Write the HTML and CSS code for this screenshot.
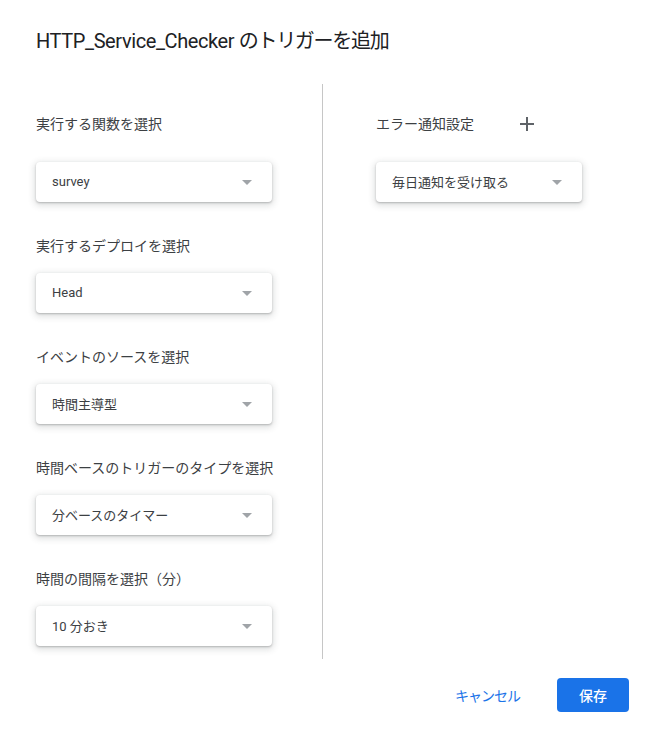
FILE: index.html
```html
<!DOCTYPE html>
<html lang="ja">
<head>
<meta charset="utf-8">
<title>トリガーを追加</title>
<link rel="stylesheet" href="styles.css">
</head>
<body>
<div class="dialog">
  <h1 class="title">HTTP_Service_Checker <span class="jp">のトリガーを追加</span></h1>
  <div class="main">
    <div class="col-left">
      <div class="group first">
        <div class="label">実行する関数を選択</div>
        <div class="select"><span>survey</span><i class="arrow"></i></div>
      </div>
      <div class="group">
        <div class="label">実行するデプロイを選択</div>
        <div class="select"><span>Head</span><i class="arrow"></i></div>
      </div>
      <div class="group">
        <div class="label">イベントのソースを選択</div>
        <div class="select"><span>時間主導型</span><i class="arrow"></i></div>
      </div>
      <div class="group">
        <div class="label">時間ベースのトリガーのタイプを選択</div>
        <div class="select"><span>分ベースのタイマー</span><i class="arrow"></i></div>
      </div>
      <div class="group">
        <div class="label">時間の間隔を選択（分）</div>
        <div class="select"><span>10 分おき</span><i class="arrow"></i></div>
      </div>
    </div>
    <div class="col-right">
      <div class="label-row">
        <div class="label">エラー通知設定</div>
        <span class="plus">
          <svg width="14" height="14" viewBox="0 0 14 14"><path d="M7 0v14M0 7h14" stroke="#5f6368" stroke-width="2"/></svg>
        </span>
      </div>
      <div class="select select-narrow"><span>毎日通知を受け取る</span><i class="arrow"></i></div>
    </div>
  </div>
  <div class="footer">
    <button class="btn-text">キャンセル</button>
    <button class="btn-primary">保存</button>
  </div>
</div>
</body>
</html>
```

FILE: styles.css
```css
html, body {
  margin: 0;
  padding: 0;
  background: #fff;
}
body {
  font-family: Roboto, "Noto Sans CJK JP", sans-serif;
  color: #3c4043;
}
.dialog {
  padding: 29px 25px 0 36px;
}
.title {
  margin: 0;
  font-size: 20px;
  line-height: 24px;
  font-weight: 400;
  color: #202124;
  letter-spacing: -0.4px;
}
.title .jp {
  letter-spacing: -1.3px;
}
.main {
  display: flex;
  margin-top: 31px;
}
.col-left {
  width: 287px;
  padding: 30px 0 13px;
  border-right: 1px solid #c6c6c6;
  box-sizing: border-box;
  display: flex;
  flex-direction: column;
  gap: 34px;
}
.col-right {
  padding: 30px 0 0 53px;
}
.label {
  font-size: 14px;
  line-height: 20px;
  color: #3c4043;
}
.group .label {
  margin-bottom: 17px;
}
.group.first .label {
  margin-bottom: 28px;
}
.select {
  width: 236px;
  height: 40px;
  box-sizing: border-box;
  border-radius: 4px;
  background: #fff;
  box-shadow: 0 1px 2px 0 rgba(60,64,67,.3), 0 2px 6px 2px rgba(60,64,67,.15);
  display: flex;
  align-items: center;
  justify-content: space-between;
  padding: 0 20px 2px 16px;
  font-size: 13px;
  color: #3c4043;
}
.select-narrow {
  width: 206px;
}
.arrow {
  width: 0;
  height: 0;
  margin-top: 2px;
  border-left: 5px solid transparent;
  border-right: 5px solid transparent;
  border-top: 5px solid #a0a4a8;
}
.label-row {
  display: flex;
  align-items: center;
  margin-bottom: 28px;
}
.plus {
  display: flex;
  align-items: center;
  margin-left: 46px;
}
.footer {
  display: flex;
  justify-content: flex-end;
  align-items: center;
  margin-top: 19px;
}
.btn-text {
  border: 0;
  background: none;
  padding: 0;
  margin-right: 37px;
  font-family: inherit;
  font-size: 14px;
  color: #1a73e8;
  font-weight: 400;
  letter-spacing: -1px;
}
.btn-primary {
  border: 0;
  width: 72px;
  height: 34px;
  border-radius: 4px;
  background: #1a73e8;
  color: #fff;
  font-family: inherit;
  font-size: 14px;
  font-weight: 500;
}
```
